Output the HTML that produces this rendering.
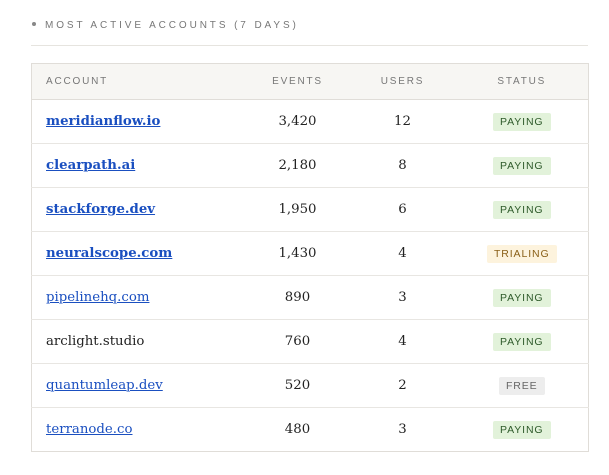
<!DOCTYPE html>
<html><head><style>
*{margin:0;padding:0;box-sizing:border-box}
body{width:609px;height:475px;background:#fff;font-family:"DejaVu Serif",serif;position:relative;overflow:hidden}
.h{position:absolute;left:31px;top:20px;font:10px "Liberation Sans",sans-serif;letter-spacing:2.9px;color:#777;}
.h b{display:inline-block;width:4px;height:4px;border-radius:50%;background:#888;vertical-align:middle;margin-left:1px;margin-right:9px;position:relative;top:-1px}
.hr{position:absolute;left:31px;width:557px;top:45px;height:1px;background:#e6e4df}
table{position:absolute;left:31px;top:63px;width:558px;border-collapse:collapse;border:1px solid #e0ddd8}
th{height:36px;background:#f7f6f3;font:normal 10px "Liberation Sans",sans-serif;letter-spacing:1.8px;color:#777;border-bottom:1px solid #e0ddd8;text-align:center}
td{height:44px;border-top:1px solid #e8e6e2;text-align:center;font-size:13.3px;color:#222}
tr:nth-child(2) td{border-top:none}
th:first-child,td:first-child{text-align:left;padding-left:14px}
a{color:#1a4fc0;text-decoration:underline;font-size:13.3px}
a.b{font-weight:bold}
.g{display:inline-block;font:10.5px "Liberation Sans",sans-serif;letter-spacing:0.9px;padding:3px 7px;border-radius:2px}
.p{background:#e2f2da;color:#2e5a2a}.t{background:#fdf3dd;color:#8a6018}.f{background:#ededed;color:#666}
</style></head><body>
<div class="h"><b></b>MOST ACTIVE ACCOUNTS (7 DAYS)</div>
<div class="hr"></div>
<table>
<tr><th style="width:214px">ACCOUNT</th><th style="width:104px">EVENTS</th><th style="width:106px">USERS</th><th>STATUS</th></tr>
<tr><td><a class="b">meridianflow.io</a></td><td>3,420</td><td>12</td><td><span class="g p">PAYING</span></td></tr>
<tr><td><a class="b">clearpath.ai</a></td><td>2,180</td><td>8</td><td><span class="g p">PAYING</span></td></tr>
<tr><td><a class="b">stackforge.dev</a></td><td>1,950</td><td>6</td><td><span class="g p">PAYING</span></td></tr>
<tr><td><a class="b">neuralscope.com</a></td><td>1,430</td><td>4</td><td><span class="g t">TRIALING</span></td></tr>
<tr><td><a>pipelinehq.com</a></td><td>890</td><td>3</td><td><span class="g p">PAYING</span></td></tr>
<tr><td>arclight.studio</td><td>760</td><td>4</td><td><span class="g p">PAYING</span></td></tr>
<tr><td><a>quantumleap.dev</a></td><td>520</td><td>2</td><td><span class="g f">FREE</span></td></tr>
<tr><td><a>terranode.co</a></td><td>480</td><td>3</td><td><span class="g p">PAYING</span></td></tr>
</table>
</body></html>
